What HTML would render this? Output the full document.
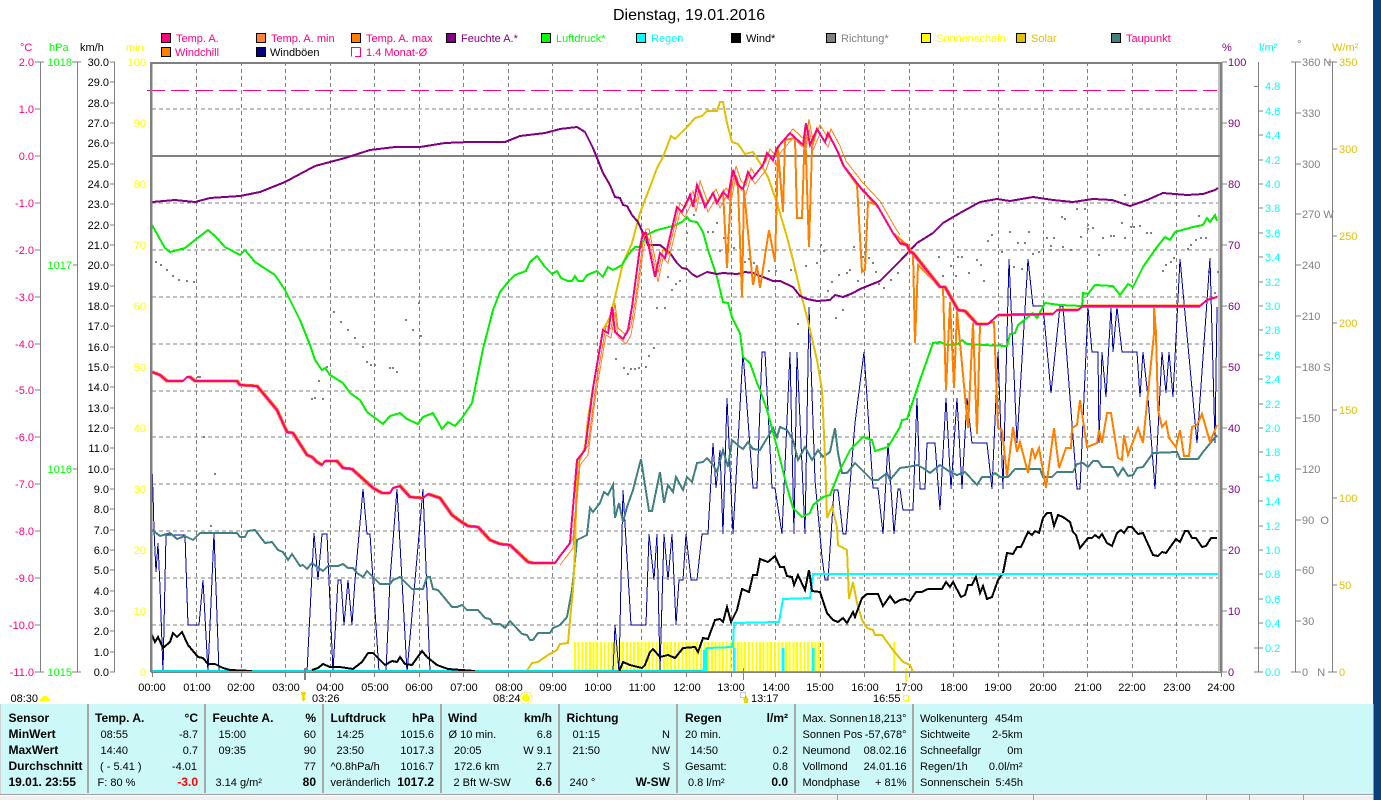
<!DOCTYPE html>
<html lang="de"><head><meta charset="utf-8"><title>Dienstag, 19.01.2016</title>
<style>html,body{margin:0;padding:0;background:#fff;width:1381px;height:800px;overflow:hidden}svg{display:block}text{font-family:"Liberation Sans",sans-serif;font-size:11px}.b{font-weight:bold;font-size:12px}</style></head><body>
<svg width="1381" height="800" viewBox="0 0 1381 800" xmlns="http://www.w3.org/2000/svg" shape-rendering="crispEdges">
<defs>
<polyline id="t" fill="none" points="152,372 160,375 167,381 183,381 187,377 190,377 195,381 237,381 240,385 257,386 277,410 287,432 293,433 307,455 312,457 317,462 322,465 325,461 337,461 343,468 352,469 363,479 373,488 382,493 390,493 393,488 400,486 410,497 423,498 428,494 440,498 452,515 460,521 468,526 478,527 490,540 500,544 510,545 528,562 533,563 555,563 560,556 570,543 577,460 585,450 593,388 603,330 608,333 612,307 615,332 623,339 628,330 632,307 640,247 643,233 646,233 655,277 660,253 665,258 677,207 682,212 690,195 693,207 697,185 705,207 713,193 717,203 723,192 728,197 733,170 738,185 743,189 748,172 752,179 763,165 767,153 773,160 777,148 790,133 803,145 806,123 810,145 817,129 825,142 828,133 837,150 843,165 860,187 877,205 893,233 900,243 907,245 910,252 913,253 940,287 945,287 958,310 965,311 977,324 988,324 998,315 1053,314 1057,310 1078,310 1083,306 1200,306 1207,300 1217,297"/>
<clipPath id="cn"><rect x="150" y="60" width="410" height="620"/><rect x="900" y="60" width="320" height="620"/></clipPath>
<clipPath id="cd"><rect x="560" y="60" width="340" height="620"/></clipPath>
</defs>
<rect width="1381" height="800" fill="#fff"/>
<rect x="1373" y="0" width="8" height="800" fill="#0a3f78"/>
<text x="613" y="20" style="font-size:16px">Dienstag, 19.01.2016</text>

<!-- legend -->
<g stroke="#000" stroke-width="1">
<rect x="161.500" y="33.500" width="9" height="9" fill="#ff0080"/><rect x="256.500" y="33.500" width="9" height="9" fill="#ff8040"/><rect x="351.500" y="33.500" width="9" height="9" fill="#ff8000"/><rect x="446.500" y="33.500" width="9" height="9" fill="#800080"/><rect x="541.500" y="33.500" width="9" height="9" fill="#00ff00"/><rect x="636.500" y="33.500" width="9" height="9" fill="#00ffff"/><rect x="731.500" y="33.500" width="9" height="9" fill="#000"/><rect x="826.500" y="33.500" width="9" height="9" fill="#808080"/><rect x="921.500" y="33.500" width="9" height="9" fill="#ffff00"/><rect x="1016.500" y="33.500" width="9" height="9" fill="#e0c000"/><rect x="1111.500" y="33.500" width="9" height="9" fill="#408080"/>
<rect x="161.500" y="47.500" width="9" height="9" fill="#ff8000"/><rect x="256.500" y="47.500" width="9" height="9" fill="#000080"/>
</g>
<path d="M360.500 47.500H351.500V56.500M355 56.500H360.500V47.500" fill="none" stroke="#ff0080"/>
<g>
<text x="176" y="42" fill="#ff0080">Temp. A.</text><text x="271" y="42" fill="#ff0080">Temp. A. min</text><text x="366" y="42" fill="#ff0080">Temp. A. max</text><text x="461" y="42" fill="#800080">Feuchte A.*</text><text x="556" y="42" fill="#00ff00">Luftdruck*</text><text x="651" y="42" fill="#00ffff">Regen</text><text x="746" y="42" fill="#000">Wind*</text><text x="841" y="42" fill="#808080">Richtung*</text><text x="936" y="42" fill="#ffff00">Sonnenschein</text><text x="1031" y="42" fill="#e0c000">Solar</text><text x="1126" y="42" fill="#ff0080">Taupunkt</text>
<text x="175" y="56" fill="#ff0080">Windchill</text><text x="270" y="56" fill="#000">Windböen</text><text x="366" y="56" fill="#ff0080">1.4 Monat-Ø</text>
</g>

<!-- axis headers -->
<text x="20" y="51" fill="#ff0080">°C</text><text x="49" y="51" fill="#00ff00">hPa</text><text x="80" y="51">km/h</text><text x="126" y="51" fill="#ffff00">min</text>
<text x="1222" y="51" fill="#800080">%</text><text x="1259" y="51" fill="#00ffff">l/m²</text><text x="1297" y="48" fill="#808080">°</text><text x="1332" y="51" fill="#e0c000">W/m²</text>

<!-- left axes -->
<path d="M40.500 62V672M77.500 62V672M114.500 62V672M35 62H44M35 109H41M35 156H41M35 203H41M35 250H41M35 297H41M35 344H41M35 390H41M35 437H41M35 484H41M35 531H41M35 578H41M35 625H41M35 672H44M72 62H81M73 265H78M73 469H78M72 672H81M110 62H115M110 82H115M110 103H115M110 123H115M110 143H115M110 164H115M110 184H115M110 204H115M110 225H115M110 245H115M110 265H115M110 286H115M110 306H115M110 326H115M110 347H115M110 367H115M110 387H115M110 408H115M110 428H115M110 448H115M110 469H115M110 489H115M110 509H115M110 530H115M110 550H115M110 570H115M110 591H115M110 611H115M110 631H115M110 652H115M110 672H115" stroke="#808080" fill="none"/>
<g text-anchor="end" fill="#ff0080"><text x="34" y="66">2.0</text><text x="34" y="113">1.0</text><text x="34" y="160">0.0</text><text x="34" y="207">-1.0</text><text x="34" y="254">-2.0</text><text x="34" y="301">-3.0</text><text x="34" y="348">-4.0</text><text x="34" y="394">-5.0</text><text x="34" y="441">-6.0</text><text x="34" y="488">-7.0</text><text x="34" y="535">-8.0</text><text x="34" y="582">-9.0</text><text x="34" y="629">-10.0</text><text x="34" y="676">-11.0</text></g>
<g text-anchor="end" fill="#00ff00"><text x="72" y="66">1018</text><text x="72" y="269">1017</text><text x="72" y="473">1016</text><text x="72" y="676">1015</text></g>
<g text-anchor="end"><text x="109" y="66">30.0</text><text x="109" y="86">29.0</text><text x="109" y="107">28.0</text><text x="109" y="127">27.0</text><text x="109" y="147">26.0</text><text x="109" y="168">25.0</text><text x="109" y="188">24.0</text><text x="109" y="208">23.0</text><text x="109" y="229">22.0</text><text x="109" y="249">21.0</text><text x="109" y="269">20.0</text><text x="109" y="290">19.0</text><text x="109" y="310">18.0</text><text x="109" y="330">17.0</text><text x="109" y="351">16.0</text><text x="109" y="371">15.0</text><text x="109" y="391">14.0</text><text x="109" y="412">13.0</text><text x="109" y="432">12.0</text><text x="109" y="452">11.0</text><text x="109" y="473">10.0</text><text x="109" y="493">9.0</text><text x="109" y="513">8.0</text><text x="109" y="534">7.0</text><text x="109" y="554">6.0</text><text x="109" y="574">5.0</text><text x="109" y="595">4.0</text><text x="109" y="615">3.0</text><text x="109" y="635">2.0</text><text x="109" y="656">1.0</text><text x="109" y="676">0.0</text></g>
<g text-anchor="end" fill="#ffff00"><text x="146" y="66">100</text><text x="146" y="127">90</text><text x="146" y="188">80</text><text x="146" y="249">70</text><text x="146" y="310">60</text><text x="146" y="371">50</text><text x="146" y="432">40</text><text x="146" y="493">30</text><text x="146" y="554">20</text><text x="146" y="615">10</text><text x="146" y="676">0</text></g>

<!-- grid -->
<g stroke="#808080" fill="none" stroke-dasharray="4 3">
<path d="M152 109H1218M152 203H1218M152 250H1218M152 297H1218M152 344H1218M152 391H1218M152 437H1218M152 484H1218M152 531H1218M152 578H1218M152 625H1218"/>
<path d="M196.500 62V672M241.500 62V672M285.500 62V672M330.500 62V672M374.500 62V672M419.500 62V672M463.500 62V672M508.500 62V672M552.500 62V672M597.500 62V672M641.500 62V672M686.500 62V672M731.500 62V672M775.500 62V672M820.500 62V672M864.500 62V672M909.500 62V672M953.500 62V672M998.500 62V672M1043.500 62V672M1087.500 62V672M1132.500 62V672M1176.500 62V672"/>
</g>

<!-- direction dots -->
<path stroke="#808080" stroke-width="2" fill="none" d="M155 262h2M160 265h2M166 270h2M172 276h2M178 280h2M186 281h2M193 282h2M197 377h2M199 377h2M203 437h2M214 474h2M210 526h2M311 399h2M314 398h2M322 399h2M318 381h2M326 367h2M333 312h2M340 322h2M347 330h2M354 338h2M362 347h2M366 362h2M370 365h2M374 365h2M389 368h2M392 368h2M396 372h2M405 320h2M412 330h2M418 303h2M420 336h2M615 359h2M623 368h2M627 374h2M630 369h2M634 369h2M638 368h2M645 367h2M648 356h2M653 348h2M656 308h2M664 308h2M667 277h2M671 290h2M675 284h2M679 281h2M686 233h2M693 215h2M707 232h2M712 232h2M716 223h2M719 251h2M723 238h2M727 238h2M733 248h2M742 246h2M744 262h2M748 259h2M753 263h2M768 271h2M775 271h2M790 270h2M794 270h2M797 324h2M805 266h2M808 237h2M816 263h2M820 245h2M823 251h2M827 291h2M831 282h2M835 318h2M838 275h2M842 310h2M846 273h2M849 270h2M853 247h2M857 281h2M862 257h2M868 258h2M872 263h2M875 272h2M878 284h2M883 288h2M890 280h2M897 273h2M913 277h2M938 257h2M942 276h2M950 266h2M955 276h2M957 257h2M961 257h2M968 273h2M976 260h2M980 265h2M983 281h2M987 241h2M991 235h2M1001 252h2M1009 232h2M1013 267h2M1017 243h2M1021 269h2M1024 243h2M1028 232h2M1032 254h2M1038 252h2M1046 238h2M1050 246h2M1050 250h2M1053 238h2M1061 217h2M1062 247h2M1064 219h2M1070 250h2M1076 209h2M1080 237h2M1084 209h2M1087 225h2M1087 229h2M1092 228h2M1098 255h2M1102 238h2M1110 236h2M1113 236h2M1121 223h2M1124 195h2M1124 238h2M1130 227h2M1133 227h2M1139 226h2M1146 233h2M1150 233h2M1162 271h2M1165 265h2M1170 262h2M1173 258h2M1187 249h2M1190 245h2M1195 240h2M1198 216h2M1200 238h2M1205 238h2M1208 272h2M1214 293h2M1217 272h2"/>

<!-- frame & references -->
<path d="M147 90.500H1217" stroke="#ff0080" fill="none" stroke-dasharray="18 6"/>
<path d="M152 156H1221" stroke="#808080" stroke-width="2" fill="none"/>

<!-- sunshine -->
<path d="M574 657H824" stroke="#ffff00" stroke-width="30" fill="none" stroke-dasharray="2 1.700"/>
<path d="M894 642V672M906 668V682" stroke="#ffff00" stroke-width="2" fill="none"/>

<!-- gusts -->
<polyline fill="none" stroke="#0000a0" points="151,442 153,493 154,530 156,572 158,543 160,587 163,672 166,535 185,535 188,625 199,625 203,580 208,672 214,533 219,672"/>
<polyline fill="none" stroke="#0000a0" points="307,672 314,533 318,580 322,534 327,534 333,672 338,580 341,580 344,625 348,580 352,625 355,580 363,489 367,534 370,534 379,672 386,672 390,580 397,489 407,672 423,489 430,672"/>
<polyline fill="none" stroke="#0000a0" points="613,672 615,625 619,672 623,490 631,625 646,625 649,534 654,580 657,534 660,670 664,534 668,580 672,534 676,625 679,580 683,580 686,534 691,580 697,580 702,534 708,534 713,443 716,488 720,450 723,534 727,398 733,534 743,352 753,488 757,488 762,352 765,352 772,488 775,488 782,534 790,352 794,534 797,352 805,534 809,307 815,480 822,557 825,580 828,580 834,490 838,490 843,534 846,534 855,423 864,352 873,488 878,488 883,534 888,443 894,534 898,489 900,489 903,510 913,510 917,398 920,489 925,489 927,443 935,443 940,510 946,398 951,489 957,398 962,489 967,398 972,443 987,443 992,489 998,352 1003,489 1009,259 1017,443 1028,259 1033,306 1043,306 1051,393 1060,306 1063,306 1077,489 1080,489 1088,307 1092,352 1098,352 1099,443 1102,352 1106,397 1111,307 1113,352 1117,307 1122,352 1137,352 1140,397 1143,352 1148,397 1155,489 1162,352 1166,393 1169,352 1173,397 1180,259 1197,443 1210,258 1215,443 1217,307"/>

<!-- dew point -->
<polyline fill="none" stroke="#408080" stroke-width="2" points="152,530 160,536 170,533 177,539 185,536 193,540 200,533 237,533 240,537 245,537 248,531 255,530 265,543 272,542 278,550 283,552 288,560 292,554 300,566 303,565 307,569 312,563 317,567 323,571 328,566 338,566 343,564 348,568 353,568 357,573 363,577 367,571 375,579 380,584 390,584 393,580 400,577 412,589 423,589 427,577 430,577 433,589 438,590 452,607 457,607 462,605 467,610 478,610 485,618 490,619 493,624 500,624 505,628 510,621 522,634 527,635 530,640 533,640 538,633 550,633 553,628 560,625 567,617 572,590 577,540 587,535 590,508 593,512 600,503 604,492 608,495 613,485 615,518 619,503 623,522 627,507 633,490 641,459 649,511 652,511 660,472 664,503 668,485 673,492 676,477 683,490 687,477 692,482 697,463 703,462 707,458 713,465 717,472 723,450 728,467 732,440 740,447 743,449 748,442 753,449 760,450 773,428 777,437 780,427 787,430 793,440 798,460 805,447 812,460 818,450 823,457 830,452 835,428 838,453 842,473 847,473 855,463 872,480 878,480 887,473 890,480 900,468 913,466 917,465 923,468 930,473 940,465 950,472 957,475 965,472 977,485 982,477 990,477 995,473 1000,477 1008,477 1015,469 1040,469 1043,477 1052,477 1057,472 1073,472 1077,464 1083,463 1088,467 1093,461 1098,461 1102,467 1113,467 1118,476 1123,468 1128,476 1133,475 1137,468 1143,467 1153,453 1177,452 1180,459 1198,459 1203,452 1217,435"/>

<!-- solar -->
<polyline fill="none" stroke="#e0c000" stroke-width="2" points="526,672 532,663 538,662 548,655 557,650 560,644 568,643 570,620 573,590 575,550 577,467 585,447 588,418 593,388 603,330 610,317 615,297 623,263 632,243 640,213 650,187 657,168 663,157 671,136 675,139 687,127 695,118 702,116 707,111 717,111 720,102 723,102 727,123 732,142 738,144 745,154 753,152 760,163 768,177 777,203 787,237 793,260 800,290 807,317 817,360 822,390 825,457 827,518 832,507 837,527 838,545 847,550 849,599 853,582 857,603 862,620 867,628 873,630 875,635 882,635 893,650 903,662 910,665 913,672"/>

<!-- pressure -->
<polyline fill="none" stroke="#00f000" stroke-width="2" points="152,225 165,248 170,252 185,248 195,240 208,230 215,236 225,247 240,255 245,250 255,262 275,275 285,290 300,320 310,345 315,360 322,370 325,368 330,375 343,383 350,393 360,400 367,412 383,424 390,416 400,413 407,419 418,424 423,417 433,413 442,429 448,422 455,426 462,418 472,403 483,349 493,310 500,292 508,282 515,275 526,271 530,262 537,256 545,267 552,274 557,271 561,278 568,281 572,281 575,276 578,281 583,281 587,275 597,271 603,277 608,267 613,270 622,265 628,255 635,247 640,247 647,235 657,230 673,226 682,222 687,217 690,221 697,222 703,232 708,250 717,277 723,302 728,303 732,317 740,333 743,357 750,363 757,383 760,390 767,410 777,447 787,487 793,508 802,517 810,513 813,505 823,497 830,495 840,470 850,450 863,437 872,440 875,451 888,447 900,427 902,420 907,419 920,380 933,343 940,342 947,345 958,344 962,340 967,344 983,345 1007,346 1010,334 1015,333 1018,325 1033,313 1037,318 1045,303 1060,305 1082,306 1083,293 1088,294 1095,285 1113,286 1120,295 1128,284 1133,287 1143,267 1157,247 1165,237 1170,240 1175,232 1193,227 1203,225 1207,218 1210,222 1215,215 1217,221"/>

<!-- humidity -->
<polyline fill="none" stroke="#800080" stroke-width="2" points="152,202 175,200 195,202 210,198 240,196 260,192 285,182 315,166 345,158 370,150 395,147 420,147 445,143 470,142 505,142 520,136 545,133 560,129 577,127 585,132 593,148 603,173 610,185 615,197 620,198 623,205 627,206 632,215 638,222 643,233 648,245 660,245 670,253 677,263 682,268 687,269 692,274 697,277 707,272 717,274 723,273 737,274 745,272 753,273 763,277 773,281 780,281 793,287 800,296 807,299 817,301 830,300 835,295 843,297 853,293 860,289 870,285 880,281 888,273 900,261 917,243 933,233 943,223 960,213 980,202 997,199 1010,201 1033,197 1053,200 1073,202 1093,199 1112,200 1130,206 1147,200 1163,193 1187,195 1203,194 1215,190 1218,188"/>

<!-- windchill -->
<polyline fill="none" stroke="#ff8000" stroke-width="2" points="717,203 723,192 724,210 727,268 732,170 738,187 742,297 744,190 753,285 757,265 760,288 769,230 775,262 778,150 783,212 785,140 795,138 797,218 802,218 805,127 809,247 812,147 817,129 825,142 828,133 837,150 843,165 857,185 862,272 865,270 868,202 877,205 893,233 907,245 913,253 915,343 918,265 940,287 943,287 946,390 950,302 954,388 957,311 968,428 973,323 977,434 980,325 994,322 998,428 1002,430 1007,476 1013,427 1017,452 1020,442 1028,473 1032,448 1035,458 1039,448 1046,488 1054,428 1059,468 1066,448 1071,448 1072,428 1077,425 1080,400 1087,447 1097,443 1099,430 1102,443 1107,413 1111,413 1118,458 1122,460 1124,435 1128,455 1138,428 1143,443 1154,333 1154,306 1156,333 1158,410 1162,427 1166,422 1169,438 1176,447 1180,430 1184,456 1189,456 1192,427 1197,425 1202,414 1210,442 1217,425"/>
<path d="M1083 307H1200" stroke="#ff8000" stroke-width="2" fill="none"/>

<!-- temp min / max / temp -->
<use href="#t" stroke="#ff8040" transform="translate(-1,1)" clip-path="url(#cn)"/>
<use href="#t" stroke="#ff8000" transform="translate(1,-1)" clip-path="url(#cn)"/>
<g clip-path="url(#cd)"><use href="#t" stroke="#ff8040" transform="translate(3,5)"/><use href="#t" stroke="#ff8000" transform="translate(3,-4)"/></g>
<use href="#t" stroke="#ff0080" stroke-width="2"/>

<!-- rain -->
<path d="M152 671H703" stroke="#00e0e0" stroke-width="2" fill="none"/>
<polyline fill="none" stroke="#00ffff" stroke-width="2" points="703,672 707,648 733,647 734,623 779,622 783,599 810,598 813,574 1218,574"/>
<path d="M704 672V650M706 672V648M734 672V648M783 672V648M813 672V648" stroke="#00ffff" stroke-width="2.500" fill="none"/>

<!-- wind -->
<g fill="none" stroke="#000" stroke-width="2">
<polyline points="152,635 155,642 158,637 163,648 170,642 173,633 177,637 182,632 188,645 198,657 203,658 208,664 215,664 223,668 230,670 252,671"/>
<polyline points="312,670 318,668 323,664 330,667 340,667 353,669 362,662 368,653 373,653 380,660 385,665 392,661 397,662 400,657 405,664 412,665 417,658 422,651 427,657 437,665 448,669 475,671"/>
<polyline points="619,672 623,662 630,665 642,668 645,665 650,652 653,649 660,657 668,655 675,658 683,648 695,647 698,652 703,638 708,639 715,620 720,619 723,622 727,607 731,622 737,610 742,589 749,592 753,575 757,575 760,559 768,562 775,556 780,567 784,567 787,576 792,577 794,585 798,575 805,590 809,570 812,591 820,592 827,613 833,620 838,622 843,618 847,623 853,612 855,617 862,598 867,594 878,594 883,606 890,596 895,603 900,600 905,599 910,601 916,592 922,592 928,589 942,589 946,582 950,587 953,582 961,597 965,595 968,585 972,585 976,577 980,593 983,586 987,599 992,597 998,580 1003,573 1007,553 1013,554 1017,547 1021,547 1028,532 1032,535 1035,531 1039,533 1043,518 1047,513 1051,513 1054,526 1058,515 1063,517 1070,522 1073,532 1076,535 1080,548 1088,538 1092,538 1095,535 1099,538 1102,534 1107,543 1112,546 1117,533 1121,530 1124,533 1128,527 1132,527 1138,534 1143,533 1153,555 1158,556 1162,552 1166,553 1176,539 1180,542 1185,531 1188,531 1192,538 1196,538 1202,547 1206,546 1211,538 1217,538"/>
</g>
<path d="M1000 574H1218" stroke="#00ffff" stroke-width="2" fill="none"/>

<!-- frame on top -->
<path d="M152 63H1222M1219 62V672M1222 62V672" stroke="#808080" fill="none" stroke-width="1"/>
<path d="M151 62V672M152 62V672M150.500 62V672" stroke="#808080" fill="none"/>
<path d="M151 63H1222" stroke="#808080" stroke-width="2" fill="none"/>
<path d="M1221 62V672" stroke="#808080" stroke-width="2" fill="none"/>
<path d="M151 672.500H1222" stroke="#808080" fill="none"/>
<path d="M152 671.500H824" stroke="#20d0d0" fill="none"/>
<path d="M824 671.500H1218" stroke="#20c8c8" fill="none"/>
<path d="M824 671.500H1218" stroke="#e0a020" fill="none" stroke-dasharray="2 2"/>
<path d="M152.500 672V677M196.500 672V677M241.500 672V677M285.500 672V677M330.500 672V677M374.500 672V677M419.500 672V677M463.500 672V677M508.500 672V677M552.500 672V677M597.500 672V677M641.500 672V677M686.500 672V677M731.500 672V677M775.500 672V677M820.500 672V677M864.500 672V677M909.500 672V677M953.500 672V677M998.500 672V677M1043.500 672V677M1087.500 672V677M1132.500 672V677M1176.500 672V677M1221.500 672V677" stroke="#808080" fill="none"/>
<path d="M305 668V680" stroke="#808080" stroke-width="2" fill="none"/><path d="M743.500 668V680" stroke="#808080" fill="none"/>
<path d="M1222 62H1227M1222 123H1227M1222 184H1227M1222 245H1227M1222 306H1227M1222 367H1227M1222 428H1227M1222 489H1227M1222 550H1227M1222 611H1227M1222 672H1227M1258.500 62V672M1254 86.500H1259M1258 111H1263M1258 135H1263M1258 160H1263M1258 184H1263M1258 208H1263M1258 233H1263M1258 257H1263M1258 282H1263M1258 306H1263M1258 330H1263M1258 355H1263M1258 379H1263M1258 404H1263M1258 428H1263M1258 452H1263M1258 477H1263M1258 501H1263M1258 526H1263M1258 550H1263M1258 574H1263M1258 599H1263M1258 623H1263M1254 648H1263M1254 672H1263M1295.500 62V672M1291 62H1301M1296 113H1301M1296 164H1301M1296 214H1301M1296 265H1301M1296 316H1301M1296 367H1301M1296 418H1301M1296 469H1301M1296 520H1301M1296 570H1301M1296 621H1301M1291 672H1301M1332.500 62V672M1328 62H1337M1333 149H1337M1333 236H1337M1333 323H1337M1333 410H1337M1333 498H1337M1333 585H1337M1328 672H1337" stroke="#808080" fill="none"/>

<!-- right labels -->
<g fill="#800080"><text x="1228" y="66">100</text><text x="1228" y="127">90</text><text x="1228" y="188">80</text><text x="1228" y="249">70</text><text x="1228" y="310">60</text><text x="1228" y="371">50</text><text x="1228" y="432">40</text><text x="1228" y="493">30</text><text x="1228" y="554">20</text><text x="1228" y="615">10</text><text x="1228" y="676">0</text></g>
<g fill="#00ffff"><text x="1265" y="90">4.8</text><text x="1265" y="115">4.6</text><text x="1265" y="139">4.4</text><text x="1265" y="164">4.2</text><text x="1265" y="188">4.0</text><text x="1265" y="212">3.8</text><text x="1265" y="237">3.6</text><text x="1265" y="261">3.4</text><text x="1265" y="286">3.2</text><text x="1265" y="310">3.0</text><text x="1265" y="334">2.8</text><text x="1265" y="359">2.6</text><text x="1265" y="383">2.4</text><text x="1265" y="408">2.2</text><text x="1265" y="432">2.0</text><text x="1265" y="456">1.8</text><text x="1265" y="481">1.6</text><text x="1265" y="505">1.4</text><text x="1265" y="530">1.2</text><text x="1265" y="554">1.0</text><text x="1265" y="578">0.8</text><text x="1265" y="603">0.6</text><text x="1265" y="627">0.4</text><text x="1265" y="652">0.2</text><text x="1265" y="676">0.0</text></g>
<g fill="#808080"><text x="1302" y="66">360 N</text><text x="1302" y="117">330</text><text x="1302" y="168">300</text><text x="1302" y="218">270 W</text><text x="1302" y="269">240</text><text x="1302" y="320">210</text><text x="1302" y="371">180 S</text><text x="1302" y="422">150</text><text x="1302" y="473">120</text><text x="1302" y="524">90&#160;&#160;O</text><text x="1302" y="574">60</text><text x="1302" y="625">30</text><text x="1302" y="676">0&#160;&#160;&#160;N</text></g>
<g fill="#e0c000"><text x="1339" y="66">350</text><text x="1339" y="153">300</text><text x="1339" y="240">250</text><text x="1339" y="327">200</text><text x="1339" y="414">150</text><text x="1339" y="502">100</text><text x="1339" y="589">50</text><text x="1339" y="676">0</text></g>

<!-- time labels -->
<g text-anchor="middle"><text x="152" y="691">00:00</text><text x="197" y="691">01:00</text><text x="241" y="691">02:00</text><text x="286" y="691">03:00</text><text x="330" y="691">04:00</text><text x="375" y="691">05:00</text><text x="419" y="691">06:00</text><text x="464" y="691">07:00</text><text x="509" y="691">08:00</text><text x="553" y="691">09:00</text><text x="598" y="691">10:00</text><text x="642" y="691">11:00</text><text x="687" y="691">12:00</text><text x="731" y="691">13:00</text><text x="776" y="691">14:00</text><text x="820" y="691">15:00</text><text x="865" y="691">16:00</text><text x="909" y="691">17:00</text><text x="954" y="691">18:00</text><text x="998" y="691">19:00</text><text x="1043" y="691">20:00</text><text x="1088" y="691">21:00</text><text x="1132" y="691">22:00</text><text x="1177" y="691">23:00</text><text x="1221" y="691">24:00</text></g>

<!-- sun / moon markers -->
<text x="10.500" y="702">08:30</text>
<path d="M40 701V699L43 696H46L49 699V701Z" fill="#ffff00"/>
<text x="312" y="702">03:26</text>
<path d="M301 692H306L304.500 698H306L303.500 702L301.500 698H302.500Z" fill="#e8d800"/>
<text x="493" y="702">08:24</text>
<circle cx="526" cy="698" r="4" fill="#ffff00"/><circle cx="526" cy="698" r="6" fill="none" stroke="#ffe880"/>
<text x="751" y="702">13:17</text>
<path d="M746 695L749 700H748V703H744V700H743Z" fill="#e8d800"/>
<rect x="740.500" y="692.500" width="5" height="5" fill="none" stroke="#8080c0" stroke-dasharray="1 1"/>
<text x="873" y="702">16:55</text>
<rect x="903.500" y="695.500" width="5" height="5" fill="#fffff0" stroke="#ffff00"/>

<!-- bottom panel -->
<rect x="1" y="704" width="1372" height="90" fill="#ccf9f7"/>
<rect x="1373" y="704" width="1" height="96" fill="#909090"/>
<rect x="0" y="704" width="1" height="96" fill="#d0d0d0"/>
<rect x="0" y="794" width="1373" height="1" fill="#a0a0a0"/>
<rect x="0" y="795" width="1373" height="1" fill="#ffffff"/>
<rect x="0" y="796" width="1373" height="4" fill="#f0f0f0"/>
<path d="M837.500 795V800M1033.500 795V800M1206.500 795V800M1249.500 795V800M1303.500 795V800" stroke="#a0a0a0" fill="none"/>
<path d="M88 704V793M205 704V793M323 704V793M441 704V793M559 704V793M677 704V793M795 704V793M913 704V793" stroke="#a8a8a8" stroke-width="2" fill="none"/>
<g>
<text class="b" x="8.500" y="722">Sensor</text><text class="b" x="8.500" y="738">MinWert</text><text class="b" x="8.500" y="754">MaxWert</text><text class="b" x="8.500" y="770">Durchschnitt</text><text class="b" x="8.500" y="786">19.01. 23:55</text>

<text class="b" x="95" y="722">Temp. A.</text><text class="b" x="198" y="722" text-anchor="end">°C</text>
<text x="100.500" y="738">08:55</text><text x="198" y="738" text-anchor="end">-8.7</text>
<text x="100.500" y="754">14:40</text><text x="198" y="754" text-anchor="end">0.7</text>
<text x="100" y="770">( - 5.41 )</text><text x="197" y="770" text-anchor="end">-4.01</text>
<text x="97.500" y="786">F: 80 %</text><text class="b" x="198" y="786" text-anchor="end" fill="#ff0000">-3.0</text>

<text class="b" x="212.500" y="722">Feuchte A.</text><text class="b" x="316" y="722" text-anchor="end">%</text>
<text x="218.500" y="738">15:00</text><text x="316" y="738" text-anchor="end">60</text>
<text x="218.500" y="754">09:35</text><text x="316" y="754" text-anchor="end">90</text>
<text x="316" y="770" text-anchor="end">77</text>
<text x="215.500" y="786">3.14 g/m²</text><text class="b" x="316" y="786" text-anchor="end">80</text>

<text class="b" x="330.500" y="722">Luftdruck</text><text class="b" x="434" y="722" text-anchor="end">hPa</text>
<text x="336.500" y="738">14:25</text><text x="434" y="738" text-anchor="end">1015.6</text>
<text x="336.500" y="754">23:50</text><text x="434" y="754" text-anchor="end">1017.3</text>
<text x="330.500" y="770">^0.8hPa/h</text><text x="434" y="770" text-anchor="end">1016.7</text>
<text x="330.500" y="786">veränderlich</text><text class="b" x="434" y="786" text-anchor="end">1017.2</text>

<text class="b" x="448" y="722">Wind</text><text class="b" x="552" y="722" text-anchor="end">km/h</text>
<text x="448.500" y="738">Ø 10 min.</text><text x="552" y="738" text-anchor="end">6.8</text>
<text x="454" y="754">20:05</text><text x="552" y="754" text-anchor="end">W 9.1</text>
<text x="454" y="770">172.6 km</text><text x="552" y="770" text-anchor="end">2.7</text>
<text x="453.500" y="786">2 Bft W-SW</text><text class="b" x="552" y="786" text-anchor="end">6.6</text>

<text class="b" x="566.500" y="722">Richtung</text>
<text x="572.500" y="738">01:15</text><text x="670" y="738" text-anchor="end">N</text>
<text x="572.500" y="754">21:50</text><text x="670" y="754" text-anchor="end">NW</text>
<text x="670" y="770" text-anchor="end">S</text>
<text x="569.500" y="786">240 °</text><text class="b" x="670" y="786" text-anchor="end">W-SW</text>

<text class="b" x="685" y="722">Regen</text><text class="b" x="788" y="722" text-anchor="end">l/m²</text>
<text x="685" y="738">20 min.</text>
<text x="690.500" y="754">14:50</text><text x="788" y="754" text-anchor="end">0.2</text>
<text x="685" y="770">Gesamt:</text><text x="788" y="770" text-anchor="end">0.8</text>
<text x="688" y="786">0.8 l/m²</text><text class="b" x="788" y="786" text-anchor="end">0.0</text>

<text x="802.500" y="722">Max. Sonnen</text><text x="906.500" y="722" text-anchor="end">18,213°</text>
<text x="802.500" y="738">Sonnen Pos</text><text x="906.500" y="738" text-anchor="end">-57,678°</text>
<text x="802.500" y="754">Neumond</text><text x="906.500" y="754" text-anchor="end">08.02.16</text>
<text x="802.500" y="770">Vollmond</text><text x="906.500" y="770" text-anchor="end">24.01.16</text>
<text x="802.500" y="786">Mondphase</text><text x="906.500" y="786" text-anchor="end">+ 81%</text>

<text x="920" y="722">Wolkenunterg</text><text x="1022.500" y="722" text-anchor="end">454m</text>
<text x="920" y="738">Sichtweite</text><text x="1022.500" y="738" text-anchor="end">2-5km</text>
<text x="920" y="754">Schneefallgr</text><text x="1022.500" y="754" text-anchor="end">0m</text>
<text x="920" y="770">Regen/1h</text><text x="1022.500" y="770" text-anchor="end">0.0l/m²</text>
<text x="920" y="786">Sonnenschein</text><text x="1023" y="786" text-anchor="end">5:45h</text>
</g>
</svg>
</body></html>
